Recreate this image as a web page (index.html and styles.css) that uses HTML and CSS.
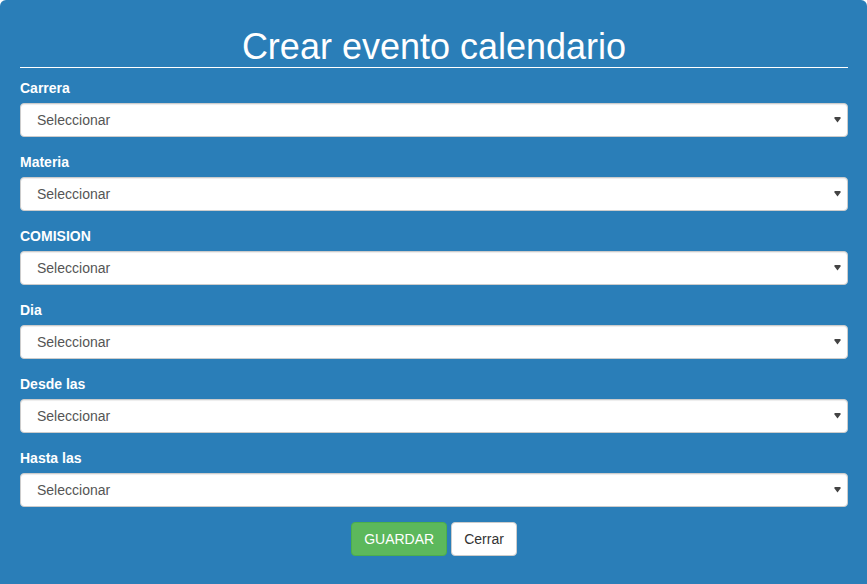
FILE: index.html
```html
<!DOCTYPE html>
<html lang="es">
<head>
<meta charset="utf-8">
<title>Crear evento calendario</title>
<link rel="stylesheet" href="styles.css">
</head>
<body>
<div class="modal">
  <h1 class="title">Crear evento calendario</h1>
  <form class="form">
    <div class="group">
      <label class="label">Carrera</label>
      <div class="select-wrap">
        <select class="select"><option>Seleccionar</option></select>
        <svg class="caret" width="7" height="6" viewBox="0 0 7 6"><path d="M0.5 0H6.5V1.5L3.5 5.5L0.5 1.5Z" fill="#444"/></svg>
      </div>
    </div>
    <div class="group">
      <label class="label">Materia</label>
      <div class="select-wrap">
        <select class="select"><option>Seleccionar</option></select>
        <svg class="caret" width="7" height="6" viewBox="0 0 7 6"><path d="M0.5 0H6.5V1.5L3.5 5.5L0.5 1.5Z" fill="#444"/></svg>
      </div>
    </div>
    <div class="group">
      <label class="label">COMISION</label>
      <div class="select-wrap">
        <select class="select"><option>Seleccionar</option></select>
        <svg class="caret" width="7" height="6" viewBox="0 0 7 6"><path d="M0.5 0H6.5V1.5L3.5 5.5L0.5 1.5Z" fill="#444"/></svg>
      </div>
    </div>
    <div class="group">
      <label class="label">Dia</label>
      <div class="select-wrap">
        <select class="select"><option>Seleccionar</option></select>
        <svg class="caret" width="7" height="6" viewBox="0 0 7 6"><path d="M0.5 0H6.5V1.5L3.5 5.5L0.5 1.5Z" fill="#444"/></svg>
      </div>
    </div>
    <div class="group">
      <label class="label">Desde las</label>
      <div class="select-wrap">
        <select class="select"><option>Seleccionar</option></select>
        <svg class="caret" width="7" height="6" viewBox="0 0 7 6"><path d="M0.5 0H6.5V1.5L3.5 5.5L0.5 1.5Z" fill="#444"/></svg>
      </div>
    </div>
    <div class="group">
      <label class="label">Hasta las</label>
      <div class="select-wrap">
        <select class="select"><option>Seleccionar</option></select>
        <svg class="caret" width="7" height="6" viewBox="0 0 7 6"><path d="M0.5 0H6.5V1.5L3.5 5.5L0.5 1.5Z" fill="#444"/></svg>
      </div>
    </div>
    <div class="actions">
      <button type="button" class="btn btn-success">GUARDAR</button>
      <button type="button" class="btn btn-default">Cerrar</button>
    </div>
  </form>
</div>
</body>
</html>
```

FILE: styles.css
```css
html, body {
  margin: 0;
  padding: 0;
  height: 100%;
  background: #ffffff;
}

body {
  font-family: "Liberation Sans", Arial, sans-serif;
  font-size: 14px;
  line-height: 20px;
}

.modal {
  box-sizing: border-box;
  height: 100%;
  background: #2a7eb8;
  border-radius: 6px 6px 0 0;
  padding: 7px 19px 0 20px;
  color: #ffffff;
}

.title {
  margin: 20px 0 10px 0;
  font-size: 36px;
  font-weight: normal;
  line-height: 39.6px;
  text-align: center;
  border-bottom: 1px solid #ffffff;
}

.form {
  margin: 0;
}

.group {
  display: flex;
  flex-direction: column;
  margin-bottom: 15px;
}

.label {
  font-weight: bold;
  margin-bottom: 5px;
  line-height: 20px;
}

.select-wrap {
  position: relative;
}

.select {
  box-sizing: border-box;
  display: block;
  width: 100%;
  height: 34px;
  margin: 0;
  padding: 6px 16px;
  font-family: "Liberation Sans", Arial, sans-serif;
  font-size: 14px;
  color: #555555;
  background: #ffffff;
  border: 1px solid #cccccc;
  border-radius: 4px;
  box-shadow: inset 0 1px 1px rgba(0, 0, 0, 0.075);
  -webkit-appearance: none;
  appearance: none;
}

.caret {
  position: absolute;
  right: 7px;
  top: 14px;
  pointer-events: none;
}

.actions {
  display: flex;
  justify-content: center;
  gap: 4px;
}

.btn {
  box-sizing: border-box;
  height: 34px;
  padding: 6px 12px;
  font-family: "Liberation Sans", Arial, sans-serif;
  font-size: 14px;
  line-height: 20px;
  border-radius: 4px;
  border: 1px solid transparent;
  cursor: pointer;
}

.btn-success {
  background: #5cb85c;
  border-color: #4cae4c;
  color: #ffffff;
}

.btn-default {
  background: #ffffff;
  border-color: #cccccc;
  color: #333333;
}
```
